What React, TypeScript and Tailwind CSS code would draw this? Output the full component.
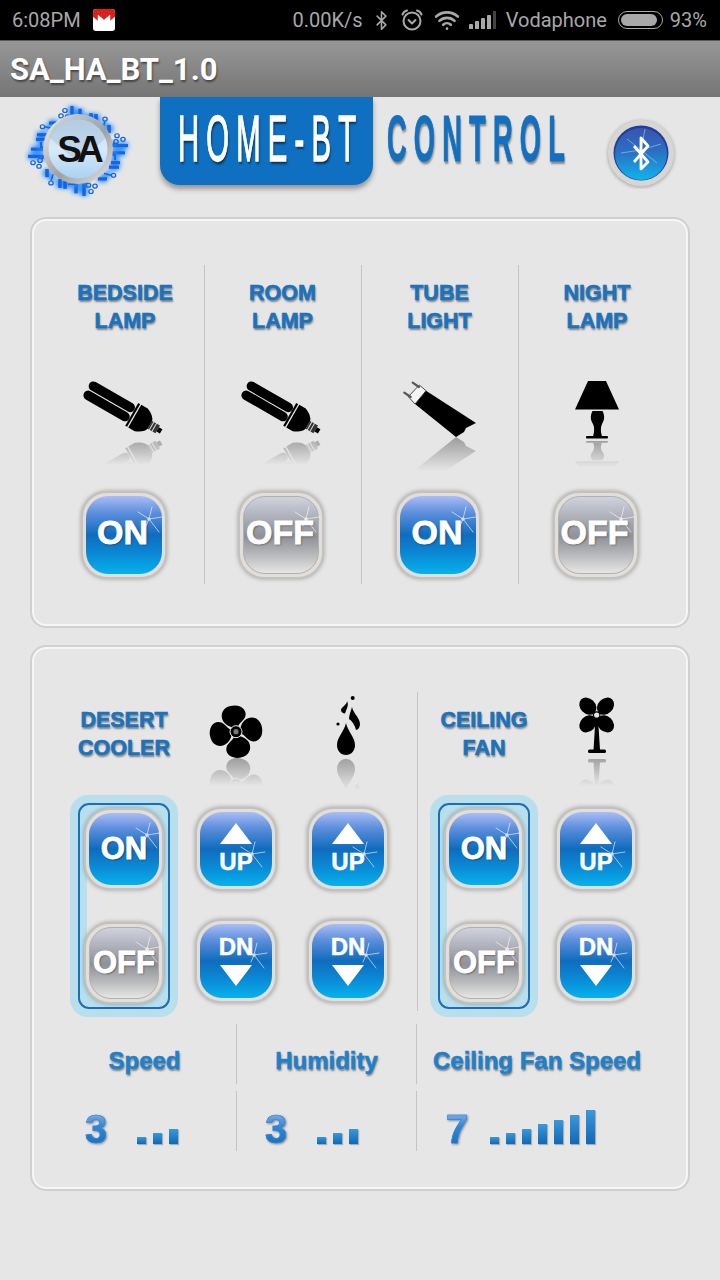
import { ReactNode } from "react";
import { Bluetooth, Wifi } from "lucide-react";

const sans = "font-['Liberation_Sans',Arial,sans-serif]";

function Sparkle({ x, y }: { x: number; y: number }) {
  return (
    <svg className="absolute inset-0 w-full h-full pointer-events-none" aria-hidden="true">
      <g transform={`translate(${x} ${y})`} stroke="#fff" strokeLinecap="round" opacity="0.75">
        <path d="M0 0L3 -12M0 0L13 -2M0 0L10 13M0 0L-11 -7M0 0L-3 7" strokeWidth="0.8" fill="none" />
        <circle cx="0" cy="0" r="1.8" fill="#fff" stroke="none" />
      </g>
    </svg>
  );
}

const sizes = {
  lg: "w-[86px] h-[88px]",
  md: "w-[82px] h-[84px]",
  sm: "w-[80px] h-[82px]",
};

function GlossButton({
  size,
  off,
  sx,
  sy,
  children,
}: {
  size: "lg" | "md" | "sm";
  off?: boolean;
  sx: number;
  sy: number;
  children: ReactNode;
}) {
  return (
    <div
      className={`relative shrink-0 ${sizes[size]} rounded-[26px] border-2 border-[#c4c2bf] bg-[#e2dfda] p-[3px] shadow-[0_0_4px_rgba(0,0,0,0.3)]`}
    >
      <div
        className={
          off
            ? "w-full h-full rounded-[22px] border border-[#b0b0b0] bg-[linear-gradient(180deg,#d0d2de_0%,#a9abb5_30%,#8f9197_52%,#b6b7b9_75%,#e6e6e6_100%)] flex flex-col items-center justify-center"
            : "w-full h-full rounded-[22px] bg-[linear-gradient(180deg,#abbdf5_0%,#5b8edc_22%,#0f6cbd_50%,#0a8ad6_75%,#05b2ec_100%)] flex flex-col items-center justify-center"
        }
      >
        {children}
      </div>
      <Sparkle x={sx} y={sy} />
    </div>
  );
}

function OnOffText({ text, size }: { text: string; size: "lg" | "sm" }) {
  return (
    <span
      className={`${sans} font-bold text-white leading-none [-webkit-text-stroke:0.8px_#fff] ${
        size === "lg" ? "text-[34px] mr-[2px] mt-[-6px]" : "text-[31px] mt-[-1px]"
      } [text-shadow:1px_1px_2px_rgba(0,0,0,0.45)]`}
    >
      {text}
    </span>
  );
}

function UpButton() {
  return (
    <GlossButton size="md" sx={55} sy={45}>
      <div className="w-0 h-0 mt-[-2px] border-x-[16px] border-x-transparent border-b-[21px] border-b-white" />
      <span className={`${sans} font-bold text-white text-[24px] leading-none mt-[6px] [-webkit-text-stroke:0.5px_#fff]`}>UP</span>
    </GlossButton>
  );
}

function DownButton() {
  return (
    <GlossButton size="md" sx={57} sy={34}>
      <span className={`${sans} font-bold text-white text-[24px] leading-none mt-[-2px] [-webkit-text-stroke:0.5px_#fff]`}>DN</span>
      <div className="w-0 h-0 mt-[6px] border-x-[16px] border-x-transparent border-t-[21px] border-t-white" />
    </GlossButton>
  );
}

function Label({ lines }: { lines: string[] }) {
  return (
    <div
      className={`${sans} font-bold text-[#1b72bd] text-[21.5px] leading-[28px] text-center [-webkit-text-stroke:0.6px_#1b72bd] [text-shadow:1px_2px_2px_rgba(0,0,0,0.45)]`}
    >
      {lines.map((line) => (
        <div key={line}>{line}</div>
      ))}
    </div>
  );
}

// icon drawn once solid and once flipped and faded for the floor reflection
function ReflectedIcon({
  id,
  mirror,
  squash = 1,
  fadeEnd,
  viewY = 0,
  children,
}: {
  id: string;
  mirror: number;
  squash?: number;
  fadeEnd: number;
  viewY?: number;
  children: ReactNode;
}) {
  return (
    <svg width="100" height="100" viewBox={`0 ${viewY} 100 100`} className="shrink-0">
      <defs>
        <linearGradient id={`${id}-fade`} gradientUnits="userSpaceOnUse" x1="0" y1={mirror} x2="0" y2={fadeEnd}>
          <stop offset="0" stopColor="#fff" stopOpacity="0.32" />
          <stop offset="1" stopColor="#fff" stopOpacity="0" />
        </linearGradient>
        <mask id={`${id}-mask`} maskUnits="userSpaceOnUse" x="0" y="0" width="100" height="110">
          <rect x="0" y={mirror} width="100" height={fadeEnd - mirror} fill={`url(#${id}-fade)`} />
        </mask>
      </defs>
      <g mask={`url(#${id}-mask)`}>
        <g transform={`translate(0 ${mirror}) scale(1 ${-squash}) translate(0 ${-mirror})`}>{children}</g>
      </g>
      {children}
    </svg>
  );
}

function BulbShape() {
  return (
    <g transform="translate(12.3 14.3) rotate(30)">
      <rect x="-1" y="-10.5" width="52" height="9.5" rx="4.7" fill="#000" />
      <rect x="-1" y="0" width="52" height="9.5" rx="4.7" fill="#000" />
      <rect x="51" y="-13.5" width="2.2" height="26" fill="#000" />
      <path d="M54.5 -13.5L62 -13.5Q71 -10 72 -4.5L72 3.5Q71 9 62 12.5L54.5 12.5Z" fill="#000" />
      <rect x="72" y="-5" width="9" height="9" fill="#333" />
      <path d="M74 -5.5V4.5M77 -5.5V4.5" stroke="#ddd" strokeWidth="1" />
      <rect x="81" y="-3" width="4" height="5" fill="#000" />
    </g>
  );
}

function TubeShape() {
  return (
    <g>
      <path d="M36 15.7L86 48L76 53L74 57L66 62L25 29Z" fill="#000" />
      <path d="M29.3 10L36 15.7L25 29L18.3 21.7Z" fill="#f4f4f4" stroke="#222" strokeWidth="0.8" />
      <path d="M22.7 7.7L29 12M14.3 17.7L20.7 22" stroke="#555" strokeWidth="2.2" strokeLinecap="round" />
    </g>
  );
}

function TableLampShape() {
  return (
    <g fill="#000">
      <path d="M41 6H59L72 34.5H28Z" />
      <path d="M45.5 36H55.5C58 41 57.5 45 55 49C53.5 52 53.5 57 55 61.5H46C47.5 57 47.5 52 46 49C43.5 45 43 41 45.5 36Z" />
      <rect x="39" y="61" width="22" height="2.5" rx="1" />
    </g>
  );
}

function FanShape() {
  const blade = "M-3 -5C-15 -9 -15 -24 -3 -26C8 -28 15 -20 11 -13C8 -9 4 -8 3 -5Z";
  return (
    <g transform="translate(50 41.7)">
      {[-8, 82, 172, 262].map((a) => (
        <path key={a} d={blade} transform={`rotate(${a})`} fill="#000" />
      ))}
      <circle r="6" fill="#000" stroke="#e6e6e6" strokeWidth="1" />
      <circle r="2.6" fill="#777" />
    </g>
  );
}

function DropShape() {
  return (
    <g fill="#000" transform="translate(-2 0)">
      <path d="M50 33C52 42 59 47 59 55C59 61 55 65 50 65C45 65 41 61 41 55C41 47 48 42 50 33Z" />
      <path d="M56 17C57 23 64 28 64 34C64 37 62 40 60 40C59 35 56 31 53 29C53 25 55 21 56 17Z" />
      <path d="M51 11C51 15 45 17 45 20C45 22 47 23.5 49 23.5C51 18 53 15 51 11Z" />
      <circle cx="56.7" cy="8" r="2" />
      <circle cx="42" cy="34" r="1.6" />
    </g>
  );
}

function CeilingFanShape() {
  return (
    <g fill="#000">
      {[45, 135, 225, 315].map((a) => (
        <ellipse key={a} cx="50.7" cy="12.5" rx="7.5" ry="9.5" transform={`rotate(${a} 50.7 25)`} />
      ))}
      <path d="M49.5 28H52L54 60H47.5Z" />
      <rect x="42" y="59.5" width="18" height="3.5" rx="1.5" />
      <circle cx="50.7" cy="25" r="3.2" fill="#e6e6e6" stroke="#000" strokeWidth="1.2" />
    </g>
  );
}

function LampColumn({
  lines,
  icon,
  off,
  last,
}: {
  lines: string[];
  icon: ReactNode;
  off?: boolean;
  last?: boolean;
}) {
  return (
    <div className={`flex flex-col items-center pt-[14px] pr-px ${last ? "" : "border-r border-[#c4c4c4]"}`}>
      <Label lines={lines} />
      <div className="mt-[40px]">{icon}</div>
      <div className="mt-[16px] mr-[3px]">
        <GlossButton size="lg" off={off} sx={66} sy={26}>
          <OnOffText text={off ? "OFF" : "ON"} size="lg" />
        </GlossButton>
      </div>
    </div>
  );
}

function PowerGroup() {
  return (
    <div className="w-[108px] h-[222px] rounded-[18px] bg-[#b9dfec] p-[8px]">
      <div className="w-full h-full rounded-[11px] border-2 border-[#1b6fb8] flex flex-col items-center py-[3px]">
        <GlossButton size="sm" sx={61} sy={25}>
          <OnOffText text="ON" size="sm" />
        </GlossButton>
        <div className="flex-1 w-[75px] -my-[30px] bg-[#e6e6e6]" />
        <GlossButton size="sm" off sx={61} sy={25}>
          <OnOffText text="OFF" size="sm" />
        </GlossButton>
      </div>
    </div>
  );
}

function UpDownColumn() {
  return (
    <div className="flex flex-col items-center gap-[28px] pt-[12px]">
      <UpButton />
      <DownButton />
    </div>
  );
}

function Level({ value, bars }: { value: string; bars: number[] }) {
  return (
    <div className="flex items-end">
      <span
        className={`${sans} font-bold text-[40px] leading-none w-[22px] mb-[-5px] [-webkit-text-stroke:0.6px_#3584d2] bg-[linear-gradient(180deg,#9cb8ea_0%,#2f86d6_45%,#0f6fbd_100%)] bg-clip-text text-transparent drop-shadow-[1px_1px_1px_rgba(0,0,0,0.4)]`}
      >
        {value}
      </span>
      <div className={`flex items-end gap-[7px] ${bars.length > 3 ? "ml-[22px]" : "ml-[30px]"}`}>
        {bars.map((h, i) => (
          <div
            key={i}
            className="w-[9px] bg-[linear-gradient(180deg,#3a98dc,#0e69b6)] shadow-[1px_1px_1px_rgba(0,0,0,0.25)]"
            style={{ height: h }}
          />
        ))}
      </div>
    </div>
  );
}

function SpeedLabel({ text }: { text: string }) {
  return (
    <span
      className={`${sans} font-bold text-[24px] text-[#1f80cb] leading-none pt-[13px] [-webkit-text-stroke:0.5px_#1f80cb] [text-shadow:1px_2px_2px_rgba(0,0,0,0.45)]`}
    >
      {text}
    </span>
  );
}

const circuitTraces = [
  { d: "M4 -33V-37H10", w: 1.8 },
  { d: "M13 -33V-42", w: 3.6 },
  { d: "M18 -31V-41", w: 3.6 },
  { d: "M25 -26L27 -33", w: 1.6 },
  { d: "M31 -20V-29", w: 3.6 },
  { d: "M34 -6H50", w: 3.4 },
  { d: "M34 2H47", w: 3.4 },
  { d: "M-6 -34L-9 -36", w: 1.6 },
];

const circuitPads = [
  [27, -35.5],
  [-10.5, -38],
  [45, -13],
  [-17, -39],
];

function SaLogo() {
  return (
    <svg width="110" height="110" viewBox="0 0 110 110" className="shrink-0">
      <defs>
        <linearGradient id="sa-face" x1="0" y1="0" x2="0" y2="1">
          <stop offset="0" stopColor="#c4dcf2" />
          <stop offset="0.5" stopColor="#d8eafa" />
          <stop offset="1" stopColor="#a9d2f2" />
        </linearGradient>
        <linearGradient id="sa-ring" x1="0" y1="0" x2="1" y2="1">
          <stop offset="0" stopColor="#f6f6f6" />
          <stop offset="0.55" stopColor="#a0a0a0" />
          <stop offset="1" stopColor="#e6e6e6" />
        </linearGradient>
        <filter id="sa-glow" x="-30%" y="-30%" width="160%" height="160%">
          <feGaussianBlur stdDeviation="2.4" />
        </filter>
      </defs>
      <g transform="translate(54 51) scale(1 0.9)">
        {[0, 90, 180, 270].map((r) => (
          <g key={r} transform={`rotate(${r})`}>
            <g fill="none" stroke="#2f90ff" filter="url(#sa-glow)">
              {circuitTraces.map((t) => (
                <path key={t.d} d={t.d} strokeWidth={t.w + 4} />
              ))}
            </g>
            <g fill="none" stroke="#1664e0">
              {circuitTraces.map((t) => (
                <path key={t.d} d={t.d} strokeWidth={t.w} />
              ))}
              {circuitPads.map(([x, y]) => (
                <circle key={x} cx={x} cy={y} r="2.2" strokeWidth="1.3" />
              ))}
            </g>
          </g>
        ))}
      </g>
      <g transform="translate(54 49)">
        <circle r="35" fill="url(#sa-ring)" />
        <circle r="29.5" fill="url(#sa-face)" />
        <path d="M-29 -12L0 14L29 -12A30 30 0 0 0 -29 -12Z" fill="#8fa8c4" opacity="0.3" />
        <text
          x="0"
          y="13"
          textAnchor="middle"
          fontFamily="Liberation Sans, Arial, sans-serif"
          fontWeight="700"
          fontSize="37"
          letterSpacing="-5"
          fill="#111"
        >
          SA
        </text>
      </g>
    </svg>
  );
}

function BluetoothBadge() {
  return (
    <svg width="72" height="72" viewBox="0 0 72 72" className="shrink-0">
      <defs>
        <linearGradient id="bt-fill" x1="0" y1="0" x2="0" y2="1">
          <stop offset="0" stopColor="#3a55b0" />
          <stop offset="0.45" stopColor="#2a6fc2" />
          <stop offset="1" stopColor="#0fb4ee" />
        </linearGradient>
        <filter id="bt-shadow" x="-20%" y="-20%" width="140%" height="140%">
          <feGaussianBlur stdDeviation="1.6" />
        </filter>
      </defs>
      <circle cx="36" cy="37" r="34" fill="#8a8a8a" opacity="0.5" filter="url(#bt-shadow)" />
      <circle cx="36" cy="36" r="33" fill="#d8d6d1" />
      <circle cx="36" cy="36" r="27.5" fill="#1f3f9c" />
      <circle cx="36" cy="37" r="26" fill="url(#bt-fill)" />
      <path d="M36 33L40 12M36 33L56 27M36 33L52 46M36 33L22 22M36 33L16 36" stroke="#fff" strokeWidth="0.7" opacity="0.55" />
      <path d="M29 29L43 45L36 52V21L43 29L29 45" fill="none" stroke="#fff" strokeWidth="2.8" strokeLinejoin="round" />
    </svg>
  );
}

export default function App() {
  return (
    <div className={`w-[720px] min-h-[1280px] bg-[#e6e6e6] overflow-hidden ${sans}`}>
      {/* status bar */}
      <div className="h-[40px] bg-black flex items-center text-[#a8a8a8] text-[20px] font-['Roboto',sans-serif] pl-[12px]">
        <span>6:08PM</span>
        <svg width="24" height="24" viewBox="0 0 24 24" className="ml-[11px] shrink-0">
          <rect x="1" y="1" width="22" height="22" rx="3" fill="#fff" />
          <path d="M1 4Q1 1 4 1H20Q23 1 23 4V9L18 13V7L12 12L6 7V13L1 9Z" fill="#d8201c" />
          <path d="M1 9L6 13V7L12 12L18 7V13L23 9" fill="none" stroke="#eee" strokeWidth="0.5" />
        </svg>
        <span className="ml-auto">0.00K/s</span>
        <Bluetooth size={21} strokeWidth={1.8} className="ml-[8px]" />
        <svg
          width="24"
          height="24"
          viewBox="0 0 24 24"
          fill="none"
          stroke="currentColor"
          strokeWidth="2"
          strokeLinecap="round"
          strokeLinejoin="round"
          className="ml-[8px] shrink-0"
        >
          <circle cx="12" cy="13" r="8.5" />
          <path d="M8.5 12L12 15.5L15.5 12M2.5 6.5Q4 3 7 2.5M21.5 6.5Q20 3 17 2.5" />
        </svg>
        <Wifi size={26} strokeWidth={2.4} className="ml-[10px]" />
        <div className="ml-[9px] flex items-end gap-[2px] h-[18px]">
          {[5, 8, 11, 14].map((h) => (
            <div key={h} className="w-[4px] rounded-t-[1px] bg-[#a8a8a8]" style={{ height: h }} />
          ))}
          <div className="w-[3px] h-[18px] bg-[#444]" />
        </div>
        <span className="ml-[10px]">Vodaphone</span>
        <div className="ml-[11px] w-[45px] h-[18px] rounded-[9px] border border-[#a8a8a8] p-[2px]">
          <div className="w-[92%] h-full rounded-[7px] bg-[#a8a8a8]" />
        </div>
        <span className="ml-[7px] mr-[13px]">93%</span>
      </div>

      {/* title bar */}
      <div className="h-[57px] bg-[linear-gradient(180deg,#979797,#757575)] flex items-center pl-[10px] border-t border-[#5a5a5a]">
        <span className="font-['Roboto',sans-serif] font-bold text-[31px] text-white leading-none [text-shadow:1px_2px_2px_rgba(0,0,0,0.45)]">
          SA_HA_BT_1.0
        </span>
      </div>

      {/* header */}
      <div className="h-[120px] flex items-start pl-[24px]">
        <div className="mt-[3px]">
          <SaLogo />
        </div>
        <div className="ml-[26px] w-[213px] h-[88px] rounded-b-[20px] bg-[#0f6fc0] shadow-[0_4px_5px_rgba(0,0,0,0.35)] pl-[18px] pt-[9px]">
          <div className="w-[180px] h-[60px]">
            <span className="inline-block origin-top-left scale-x-[0.45] whitespace-nowrap text-white text-[65px] leading-none tracking-[16px] [-webkit-text-stroke:1.5px_#fff] [text-shadow:2px_3px_3px_rgba(0,0,0,0.5)]">
              HOME-BT
            </span>
          </div>
        </div>
        <div className="ml-[14px] mt-[9px] w-[180px] h-[60px]">
          <span className="inline-block origin-top-left scale-x-[0.42] whitespace-nowrap font-bold text-[#1470bf] text-[65px] leading-none tracking-[17px] [-webkit-text-stroke:1px_#1470bf] [text-shadow:2px_3px_3px_rgba(0,0,0,0.4)]">
            CONTROL
          </span>
        </div>
        <div className="ml-auto mr-[43px] mt-[20px]">
          <BluetoothBadge />
        </div>
      </div>

      {/* lights */}
      <div className="mx-[30px] h-[411px] box-border rounded-[16px] border-2 border-[#d0d0d0] shadow-[inset_0_0_0_2px_#f6f6f6] pt-[46px] pl-[15px]">
        <div className="grid grid-cols-[158px_157px_157px_157px] h-[319px]">
          <LampColumn
            lines={["BEDSIDE", "LAMP"]}
            icon={
              <ReflectedIcon id="bulb1" mirror={62} fadeEnd={90}>
                <BulbShape />
              </ReflectedIcon>
            }
          />
          <LampColumn
            lines={["ROOM", "LAMP"]}
            off
            icon={
              <ReflectedIcon id="bulb2" mirror={62} fadeEnd={90}>
                <BulbShape />
              </ReflectedIcon>
            }
          />
          <LampColumn
            lines={["TUBE", "LIGHT"]}
            icon={
              <ReflectedIcon id="tube" mirror={62} fadeEnd={96}>
                <TubeShape />
              </ReflectedIcon>
            }
          />
          <LampColumn
            lines={["NIGHT", "LAMP"]}
            off
            last
            icon={
              <ReflectedIcon id="lamp" mirror={65} squash={0.7} fadeEnd={92}>
                <TableLampShape />
              </ReflectedIcon>
            }
          />
        </div>
      </div>

      {/* cooler and fan */}
      <div className="mx-[30px] mt-[17px] h-[546px] box-border rounded-[16px] border-2 border-[#d0d0d0] shadow-[inset_0_0_0_2px_#f6f6f6] pt-[45px]">
        <div className="flex h-[319px]">
          <div className="w-[386px] pl-[38px] border-r border-[#c4c4c4] grid grid-cols-[108px_116px_108px] grid-rows-[103px_216px] justify-items-center">
            <div className="pt-[14px]">
              <Label lines={["DESERT", "COOLER"]} />
            </div>
            <ReflectedIcon id="fan" mirror={68} fadeEnd={96} viewY={2}>
              <FanShape />
            </ReflectedIcon>
            <ReflectedIcon id="drop" mirror={67} fadeEnd={100} viewY={2}>
              <DropShape />
            </ReflectedIcon>
            <PowerGroup />
            <UpDownColumn />
            <UpDownColumn />
          </div>
          <div className="pl-[12px] grid grid-cols-[108px_116px] grid-rows-[103px_216px] justify-items-center">
            <div className="pt-[14px]">
              <Label lines={["CEILING", "FAN"]} />
            </div>
            <ReflectedIcon id="cfan" mirror={66} fadeEnd={96} viewY={2}>
              <CeilingFanShape />
            </ReflectedIcon>
            <PowerGroup />
            <UpDownColumn />
          </div>
        </div>

        <div className="mt-[13px] grid grid-cols-[205px_180px_240px] grid-rows-[60px_60px] gap-y-[7px]">
          <div className="border-r border-[#c4c4c4] pl-[21px] flex items-center justify-center">
            <SpeedLabel text="Speed" />
          </div>
          <div className="border-r border-[#c4c4c4] flex items-center justify-center">
            <SpeedLabel text="Humidity" />
          </div>
          <div className="flex items-center justify-center">
            <SpeedLabel text="Ceiling Fan Speed" />
          </div>
          <div className="border-r border-[#c4c4c4] pl-[53px] pb-[7px] flex items-end">
            <Level value="3" bars={[7, 11, 15]} />
          </div>
          <div className="border-r border-[#c4c4c4] pl-[28px] pb-[7px] flex items-end">
            <Level value="3" bars={[7, 11, 15]} />
          </div>
          <div className="pl-[29px] pb-[7px] flex items-end">
            <Level value="7" bars={[7, 11, 15, 20, 24, 29, 34]} />
          </div>
        </div>
      </div>
    </div>
  );
}
